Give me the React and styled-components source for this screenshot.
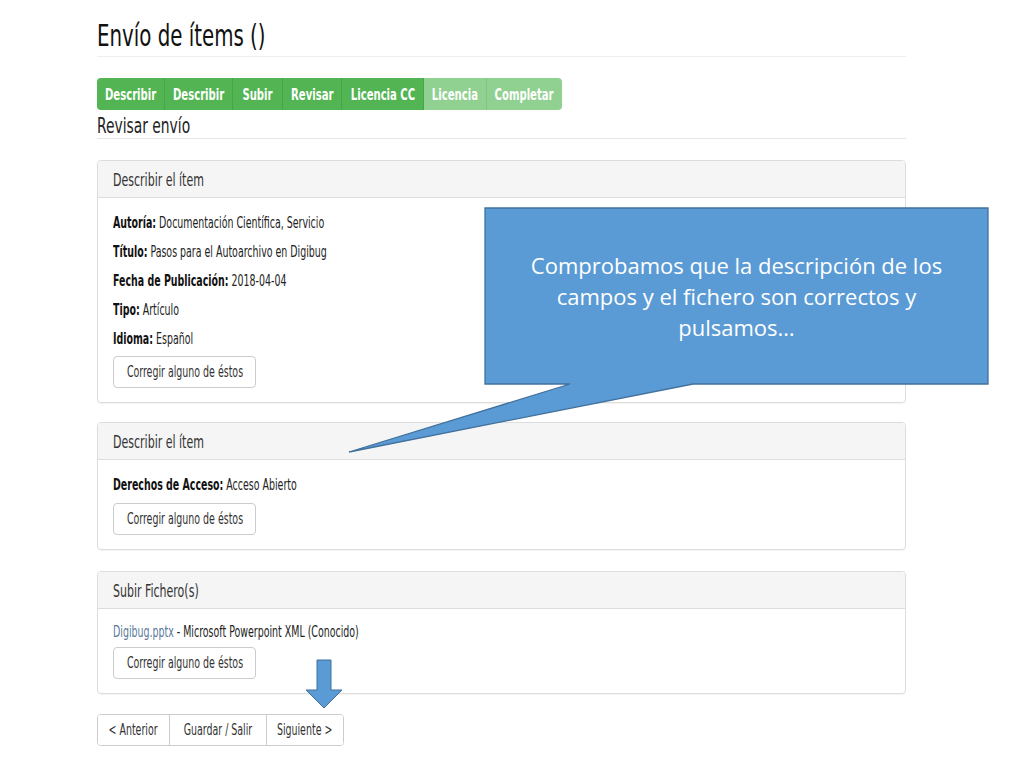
import React from 'react';
import styled, { createGlobalStyle } from 'styled-components';

const GlobalStyle = createGlobalStyle`
  *, *::before, *::after {
    box-sizing: border-box;
  }
  html, body {
    margin: 0;
    padding: 0;
    background: #fff;
  }
  body {
    font-family: 'DejaVu Sans', 'Liberation Sans', sans-serif;
    font-stretch: condensed;
    color: #333;
  }
`;

// DejaVu Condensed squeezed further to look like the tall narrow face of the original
const Narrow = styled.span`
  display: inline-block;
  white-space: nowrap;
  transform: scaleX(${(p) => p.$sx || 0.7});
  transform-origin: ${(p) => (p.$center ? 'center' : 'left')} center;
`;

const Page = styled.div`
  position: relative;
  width: 1024px;
  height: 768px;
  overflow: hidden;
`;

const Container = styled.div`
  width: 809px;
  margin-left: 97px;
  padding-top: 16px;
`;

const Title = styled.h1`
  margin: 0;
  font-size: 31px;
  font-weight: 400;
  color: #111;
  line-height: 38px;
  height: 41px;
  padding-bottom: 2px;
  border-bottom: 1px solid #eee;
`;

const Steps = styled.div`
  display: inline-flex;
  margin-top: 21px;
  height: 32px;
  border-radius: 4px;
  overflow: hidden;
`;

const Step = styled.div`
  display: flex;
  align-items: center;
  justify-content: center;
  width: ${(p) => p.$w}px;
  background: ${(p) => (p.$done ? '#52b452' : '#90d090')};
  color: #fff;
  font-size: 16px;
  font-weight: 700;
  border-right: 1px solid ${(p) => (p.$done ? '#45a845' : '#80c480')};
  &:last-child {
    border-right: none;
  }
`;

const SubTitle = styled.h2`
  margin: 3px 0 0;
  font-size: 22px;
  font-weight: 400;
  color: #222;
  line-height: 25px;
  height: 26px;
  border-bottom: 1px solid #e5e5e5;
`;

const Panel = styled.div`
  margin-top: ${(p) => p.$top || 20}px;
  border: 1px solid #ddd;
  border-radius: 4px;
  box-shadow: 0 1px 1px rgba(0, 0, 0, 0.05);
`;

const PanelHeading = styled.div`
  height: 37px;
  padding: 0 15px;
  display: flex;
  align-items: center;
  background: #f5f5f5;
  border-bottom: 1px solid #ddd;
  font-size: 18px;
  color: #333;
  border-radius: 3px 3px 0 0;
`;

const PanelBody = styled.div`
  padding: ${(p) => p.$pad || '15px'};
`;

const Field = styled.div`
  font-size: 15px;
  line-height: 20px;
  height: 20px;
  margin-bottom: ${(p) => p.$mb ?? 9}px;
  color: #222;
  b {
    font-weight: 700;
    color: #111;
  }
`;

const FileLink = styled.span`
  color: #58799a;
`;

const Button = styled.button`
  font-family: inherit;
  font-stretch: condensed;
  font-size: 15px;
  color: #333;
  background: #fff;
  border: 1px solid #ccc;
  border-radius: 4px;
  height: 32px;
  width: 143px;
  padding: 0;
  display: flex;
  align-items: center;
  justify-content: center;
  cursor: pointer;
`;

const NavGroup = styled.div`
  display: inline-flex;
  margin-top: 20px;
  border: 1px solid #ccc;
  border-radius: 4px;
  overflow: hidden;
`;

const NavButton = styled.button`
  font-family: inherit;
  font-stretch: condensed;
  font-size: 15px;
  color: #333;
  background: #fff;
  border: none;
  border-right: 1px solid #ccc;
  height: 30px;
  width: ${(p) => p.$w}px;
  padding: 0;
  display: flex;
  align-items: center;
  justify-content: center;
  &:last-child {
    border-right: none;
  }
`;

const Overlay = styled.svg`
  position: absolute;
  left: 0;
  top: 0;
  pointer-events: none;
`;

const CalloutText = styled.div`
  position: absolute;
  left: 486px;
  top: 250px;
  width: 501px;
  text-align: center;
  font-family: 'Open Sans', 'Noto Sans', sans-serif;
  font-stretch: normal;
  font-size: 22px;
  line-height: 31px;
  color: #fff;
`;

const fix = 'Corregir alguno de éstos';

export default function App() {
  return (
    <Page>
      <GlobalStyle />
      <Container>
        <Title><Narrow $sx={0.71}>Envío de ítems ()</Narrow></Title>
        <Steps>
          <Step $done $w={68}><Narrow $center>Describir</Narrow></Step>
          <Step $done $w={68}><Narrow $center>Describir</Narrow></Step>
          <Step $done $w={50}><Narrow $center>Subir</Narrow></Step>
          <Step $done $w={59}><Narrow $center>Revisar</Narrow></Step>
          <Step $done $w={82}><Narrow $center>Licencia CC</Narrow></Step>
          <Step $w={63}><Narrow $center>Licencia</Narrow></Step>
          <Step $w={75}><Narrow $center>Completar</Narrow></Step>
        </Steps>
        <SubTitle><Narrow>Revisar envío</Narrow></SubTitle>

        <Panel $top={21}>
          <PanelHeading><Narrow $sx={0.68}>Describir el ítem</Narrow></PanelHeading>
          <PanelBody $pad="15px 15px 14px">
            <Field><Narrow><b>Autoría:</b> Documentación Científica, Servicio</Narrow></Field>
            <Field><Narrow><b>Título:</b> Pasos para el Autoarchivo en Digibug</Narrow></Field>
            <Field><Narrow><b>Fecha de Publicación:</b> 2018-04-04</Narrow></Field>
            <Field><Narrow><b>Tipo:</b> Artículo</Narrow></Field>
            <Field $mb={7}><Narrow><b>Idioma:</b> Español</Narrow></Field>
            <Button><Narrow $center>{fix}</Narrow></Button>
          </PanelBody>
        </Panel>

        <Panel $top={19}>
          <PanelHeading><Narrow $sx={0.68}>Describir el ítem</Narrow></PanelHeading>
          <PanelBody $pad="15px 15px 14px">
            <Field $mb={8}><Narrow><b>Derechos de Acceso:</b> Acceso Abierto</Narrow></Field>
            <Button><Narrow $center>{fix}</Narrow></Button>
          </PanelBody>
        </Panel>

        <Panel $top={21}>
          <PanelHeading><Narrow $sx={0.68}>Subir Fichero(s)</Narrow></PanelHeading>
          <PanelBody $pad="13px 15px 14px">
            <Field $mb={5}>
              <Narrow>
                <FileLink>Digibug.pptx</FileLink> - Microsoft Powerpoint XML (Conocido)
              </Narrow>
            </Field>
            <Button><Narrow $center>{fix}</Narrow></Button>
          </PanelBody>
        </Panel>

        <NavGroup>
          <NavButton $w={72}><Narrow $center>&lt; Anterior</Narrow></NavButton>
          <NavButton $w={97}><Narrow $center>Guardar / Salir</Narrow></NavButton>
          <NavButton $w={76}><Narrow $center>Siguiente &gt;</Narrow></NavButton>
        </NavGroup>
      </Container>

      <Overlay width="1024" height="768" viewBox="0 0 1024 768">
        <path
          d="M485 208 H988 V384 H693 L349 452 L570 384 H485 Z"
          fill="#5b9bd5"
          stroke="#41719c"
          strokeWidth="1.3"
        />
        <path
          d="M317 660 H331 V690 H342 L324 708 L306 690 H317 Z"
          fill="#5b9bd5"
          stroke="#41719c"
          strokeWidth="1"
        />
      </Overlay>
      <CalloutText>
        Comprobamos que la descripción de los
        <br />
        campos y el fichero son correctos y
        <br />
        pulsamos…
      </CalloutText>
    </Page>
  );
}
